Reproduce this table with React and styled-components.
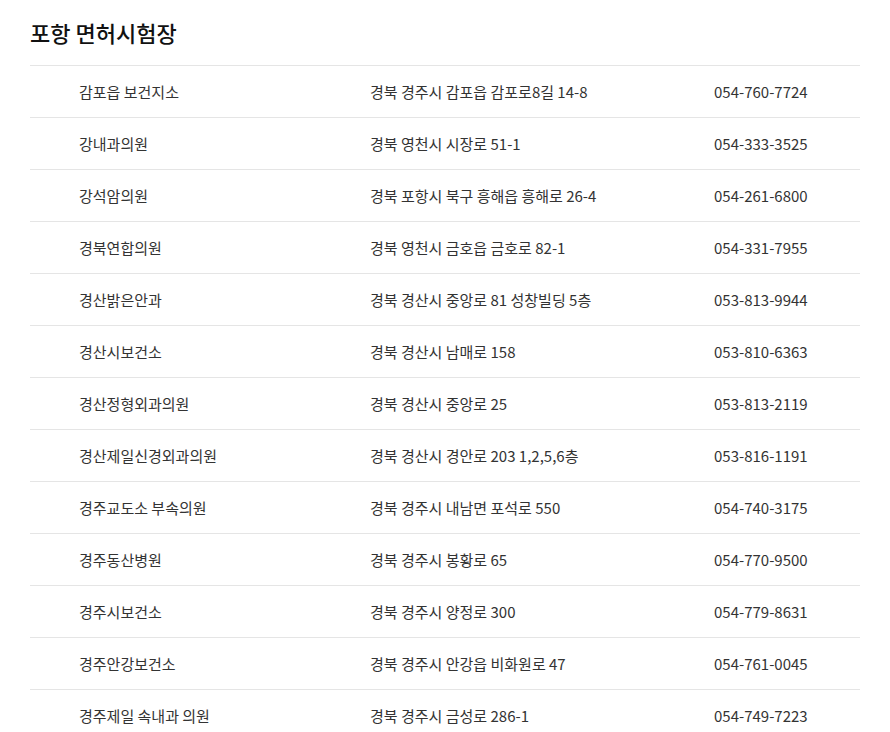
import styled, { createGlobalStyle } from 'styled-components';

const GlobalStyle = createGlobalStyle`
  body {
    margin: 0;
    background: #fff;
    font-family: "Noto Sans CJK KR", "Noto Sans", sans-serif;
    color: #333;
  }
`;

const Page = styled.div`
  padding: 14px 30px 0 30px;
  width: 830px;
`;

const Title = styled.h2`
  margin: 0;
  font-size: 22px;
  font-weight: 500;
  color: #111;
  line-height: 36px;
  padding-bottom: 15px;
`;

const List = styled.div`
  border-top: 1px solid #e5e5e5;
`;

const Row = styled.div`
  display: grid;
  grid-template-columns: 340px 344px 1fr;
  align-items: center;
  height: 51px;
  border-bottom: 1px solid #e5e5e5;
  font-size: 15px;
  color: #333;
`;

const Cell = styled.div`
  padding-left: ${(p) => p.$indent || 0}px;
  white-space: nowrap;
`;

const rows = [
  ['감포읍 보건지소', '경북 경주시 감포읍 감포로8길 14-8', '054-760-7724'],
  ['강내과의원', '경북 영천시 시장로 51-1', '054-333-3525'],
  ['강석암의원', '경북 포항시 북구 흥해읍 흥해로 26-4', '054-261-6800'],
  ['경북연합의원', '경북 영천시 금호읍 금호로 82-1', '054-331-7955'],
  ['경산밝은안과', '경북 경산시 중앙로 81 성창빌딩 5층', '053-813-9944'],
  ['경산시보건소', '경북 경산시 남매로 158', '053-810-6363'],
  ['경산정형외과의원', '경북 경산시 중앙로 25', '053-813-2119'],
  ['경산제일신경외과의원', '경북 경산시 경안로 203 1,2,5,6층', '053-816-1191'],
  ['경주교도소 부속의원', '경북 경주시 내남면 포석로 550', '054-740-3175'],
  ['경주동산병원', '경북 경주시 봉황로 65', '054-770-9500'],
  ['경주시보건소', '경북 경주시 양정로 300', '054-779-8631'],
  ['경주안강보건소', '경북 경주시 안강읍 비화원로 47', '054-761-0045'],
  ['경주제일 속내과 의원', '경북 경주시 금성로 286-1', '054-749-7223'],
];

export default function App() {
  return (
    <>
      <GlobalStyle />
      <Page>
        <Title>포항 면허시험장</Title>
        <List>
          {rows.map(([name, addr, tel]) => (
            <Row key={name}>
              <Cell $indent={49}>{name}</Cell>
              <Cell>{addr}</Cell>
              <Cell>{tel}</Cell>
            </Row>
          ))}
        </List>
      </Page>
    </>
  );
}
